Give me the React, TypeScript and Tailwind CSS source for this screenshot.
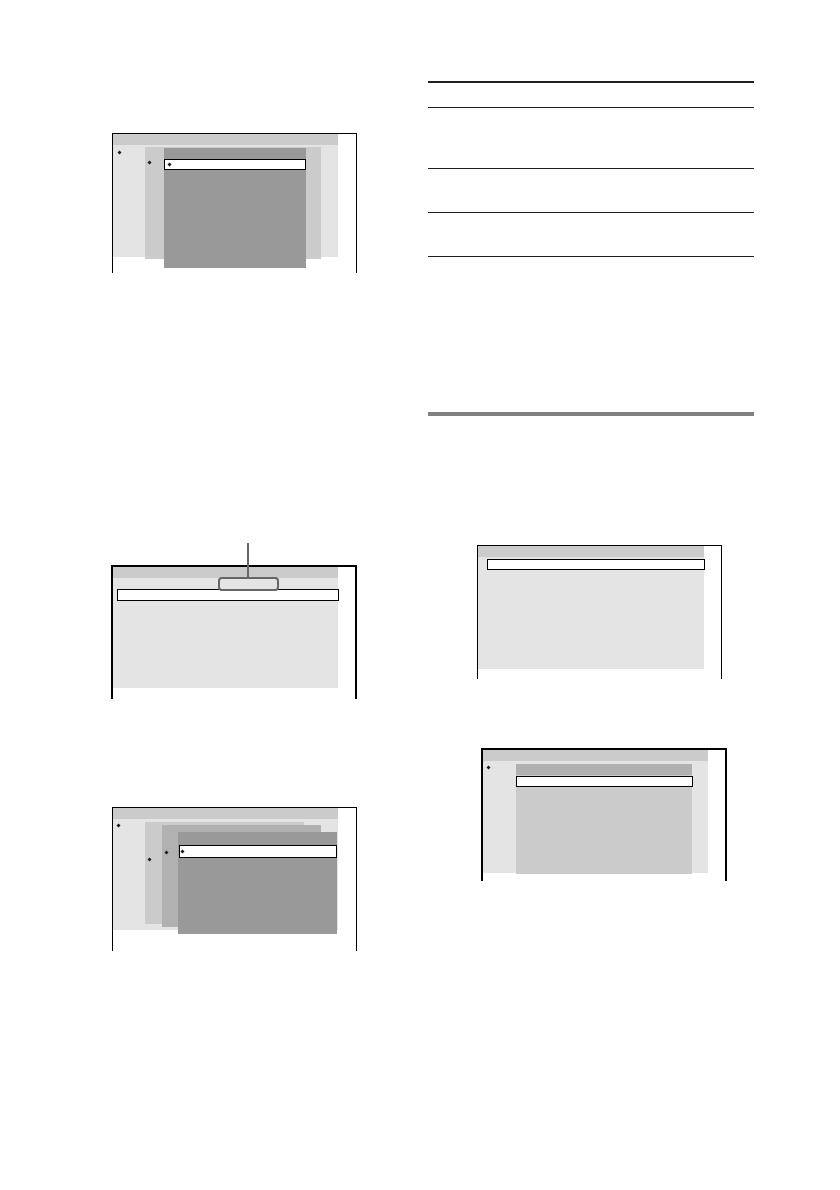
import React from 'react';
import clsx from 'clsx';

type BoxProps = {
    className?: string;
    children?: React.ReactNode;
};

const Marker: React.FC = () => (
    <svg viewBox="0 0 5 5" className="block w-[5px] h-[5px] shrink-0" aria-hidden="true">
        <path d="M2.5 0.5 4.5 2.5 2.5 4.5 0.5 2.5Z" fill="#1a1a1a" />
    </svg>
);

/* Monitor outline, open at the bottom */
const Screen: React.FC<BoxProps> = ({ className, children }) => (
    <div className={clsx('relative border-black', className)}>{children}</div>
);

const TitleBar: React.FC = () => <div className="h-[11px] bg-[#cbcbcb]" />;

const Body: React.FC<BoxProps> = ({ className, children }) => (
    <div className={clsx('bg-[#e4e4e4]', className)}>{children}</div>
);

/* Sub menu stacked over the screen body */
const Panel: React.FC<BoxProps> = ({ className, children }) => (
    <div className={clsx('absolute', className)}>{children}</div>
);

const SelectedRow: React.FC<BoxProps> = ({ className, children }) => (
    <div className={clsx('flex items-center border border-black bg-white', className)}>{children}</div>
);

const App: React.FC = () => {
    return (
        <main className="min-h-screen bg-white grid grid-cols-[245fr_326fr] gap-x-[71px] items-start pl-28 pr-[86px] pb-20">
            <div className="pt-[133px]">
                {/* Third level menu */}
                <Screen className="h-[140px] border-x border-t">
                    <div className="pr-[18px]">
                        <TitleBar />
                        <Body className="h-28 pt-[5px] pl-1">
                            <Marker />
                        </Body>
                    </div>
                    <Panel className="left-8 right-[35px] top-[13px] h-28 pt-[13px] pl-0.5 bg-[#cbcbcb]">
                        <Marker />
                    </Panel>
                    <Panel className="left-[51px] right-[50px] top-[14px] h-[120px] pt-[11px] bg-[#999999]">
                        <SelectedRow className="h-[11px] pl-0.5">
                            <Marker />
                        </SelectedRow>
                    </Panel>
                </Screen>

                {/* Callout on the list heading */}
                <div className="relative mt-[270px] -ml-px pt-[22px]">
                    <Screen className="h-[134px] border-x-2 border-t-2">
                        <div className="pr-[17px]">
                            <TitleBar />
                            <Body className="h-[110px] pt-[11px] pl-1">
                                <SelectedRow className="h-3 -mr-px" />
                            </Body>
                        </div>
                    </Screen>
                    <div className="absolute top-0 left-[107px] w-[61px]">
                        <div className="ml-[29px] w-0.5 h-[34px] bg-[#666666]" />
                        <div className="h-[14px] rounded border-2 border-[#666666]" />
                    </div>
                </div>

                {/* Fourth level menu */}
                <Screen className="mt-[108px] h-36 border-x border-t">
                    <div className="pr-[18px]">
                        <TitleBar />
                        <Body className="h-[111px] pt-1 pl-[3px]">
                            <Marker />
                        </Body>
                    </div>
                    <Panel className="left-8 right-[52px] top-[14px] h-[102px] pt-[35px] pl-0.5 bg-[#cbcbcb]">
                        <Marker />
                    </Panel>
                    <Panel className="left-[49px] right-[35px] top-[17px] h-[102px] pt-[25px] pl-0.5 bg-[#b1b1b1]">
                        <Marker />
                    </Panel>
                    <Panel className="left-[65px] right-[19px] top-6 h-[102px] pt-[13px] pl-px bg-[#999999]">
                        <SelectedRow className="h-[13px]">
                            <Marker />
                        </SelectedRow>
                    </Panel>
                </Screen>
            </div>

            <div className="pt-[81px]">
                <table className="w-full border-separate border-spacing-0">
                    <thead>
                        <tr>
                            <th className="h-[27px] p-0 border-t-2 border-b border-[#231f20]" />
                        </tr>
                    </thead>
                    <tbody>
                        <tr>
                            <td className="h-[61px] p-0 border-b border-[#231f20]" />
                        </tr>
                        <tr>
                            <td className="h-11 p-0 border-b border-[#231f20]" />
                        </tr>
                        <tr>
                            <td className="h-11 p-0 border-b border-[#231f20]" />
                        </tr>
                    </tbody>
                </table>

                <hr className="mt-[155px] h-1 border-0 bg-[#808080]" />

                {/* Top level menu */}
                <Screen className="mt-[129px] ml-[49px] mr-8 h-[134px] border-x border-t">
                    <div className="pr-[17px]">
                        <TitleBar />
                        <Body className="h-28 pt-0.5 pl-[9px]">
                            <SelectedRow className="h-[11px] -mr-px" />
                        </Body>
                    </div>
                </Screen>

                {/* Second level menu */}
                <Screen className="mt-[69px] ml-[53px] mr-[27px] h-[133px] border-x-2 border-t-2">
                    <div className="pr-[17px]">
                        <TitleBar />
                        <Body className="h-28 pt-1 pl-[3px]">
                            <Marker />
                        </Body>
                    </div>
                    <Panel className="inset-x-[33px] top-[14px] h-[110px] bg-[#cbcbcb]">
                        <div className="h-[11px] bg-[#b1b1b1]" />
                        <SelectedRow className="mt-px h-[11px] -mr-px" />
                    </Panel>
                </Screen>
            </div>
        </main>
    );
};

export default App;
